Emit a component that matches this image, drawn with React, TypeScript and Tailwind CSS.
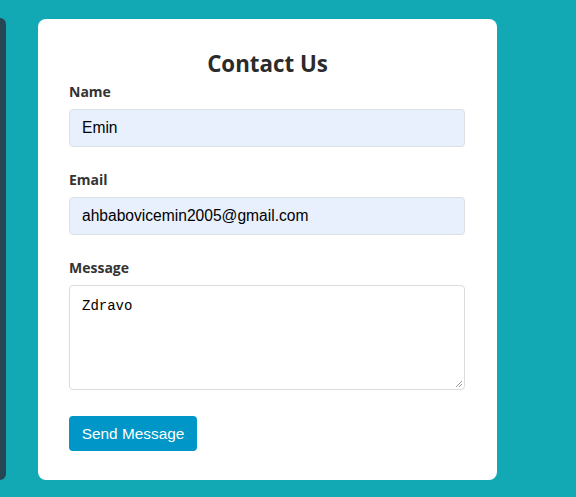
import React from "react";

export default function App() {
  return (
    <div className="w-[576px] h-[497px] bg-[#12a9b5] flex overflow-hidden">
      <div className="w-[6px] mt-[18px] h-[462px] bg-[#264653] rounded-r-[6px] shrink-0" />
      <div className="ml-[32px] mt-[19px] w-[459px] h-[461px] bg-white rounded-[8px] px-[31px] pt-[30px] shrink-0 font-['Open_Sans',sans-serif] text-[#333]">
        <h2 className="text-center text-[22.3px] font-bold leading-[30px] text-[#2b2b2b] mb-[3px]">Contact Us</h2>
        <label className="block text-[14px] font-bold leading-[20px] mb-[7px]">Name</label>
        <div className="h-[38px] w-[396px] bg-[#e8f0fe] border border-[#dcdfe3] rounded-[4px] px-[12px] flex items-center font-['Liberation_Sans',Arial,sans-serif] text-[15.6px] text-black">Emin</div>
        <label className="block text-[14px] font-bold leading-[20px] mt-[23px] mb-[7px]">Email</label>
        <div className="h-[38px] w-[396px] bg-[#e8f0fe] border border-[#dcdfe3] rounded-[4px] px-[12px] flex items-center font-['Liberation_Sans',Arial,sans-serif] text-[15.6px] text-black">ahbabovicemin2005@gmail.com</div>
        <label className="block text-[14px] font-bold leading-[20px] mt-[23px] mb-[7px]">Message</label>
        <div className="relative h-[105px] w-[396px] bg-white border border-[#dcdcdc] rounded-[4px] px-[12px] pt-[11px] font-['Liberation_Mono',monospace] text-[14px] text-black leading-[18px]">
          Zdravo
          <svg className="absolute right-[1px] bottom-[1px]" width="9" height="9" viewBox="0 0 9 9">
            <path d="M8 2 L2 8 M8 5 L5 8" stroke="#999" strokeWidth="1" />
          </svg>
        </div>
        <button className="mt-[26px] h-[35px] w-[128px] bg-[#0096c7] rounded-[4px] text-white font-['Liberation_Sans',Arial,sans-serif] text-[15.4px]">Send Message</button>
      </div>
    </div>
  );
}
